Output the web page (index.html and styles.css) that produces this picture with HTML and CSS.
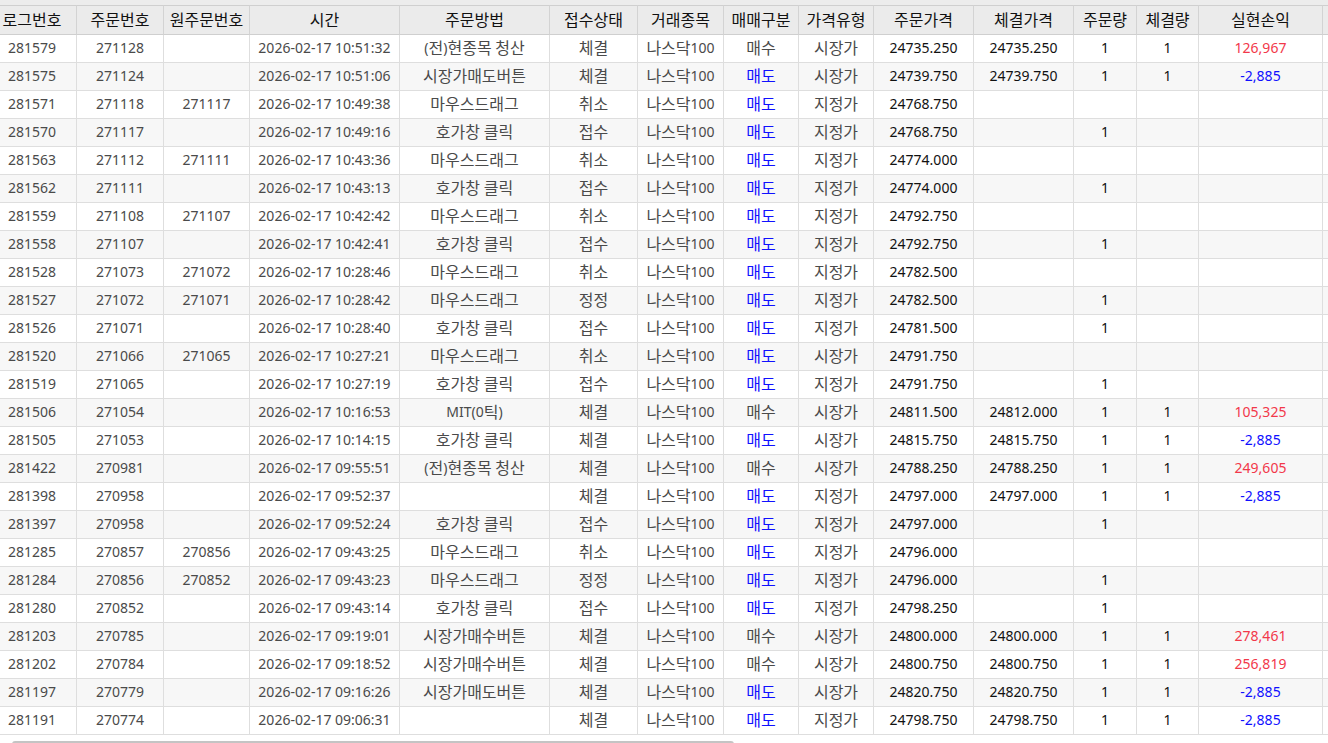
FILE: index.html
```html
<!DOCTYPE html>
<html lang="ko">
<head>
<meta charset="utf-8">
<title>주문 로그</title>
<link rel="stylesheet" href="styles.css">
</head>
<body>
<div class="topstrip"></div>
<div class="grid">
  <div class="row head">
    <div class="c first">로그번호</div><div class="c">주문번호</div><div class="c">원주문번호</div><div class="c">시간</div><div class="c">주문방법</div><div class="c">접수상태</div><div class="c">거래종목</div><div class="c">매매구분</div><div class="c">가격유형</div><div class="c">주문가격</div><div class="c">체결가격</div><div class="c">주문량</div><div class="c">체결량</div><div class="c">실현손익</div><div class="c"></div>
  </div>
</div>
<div class="grid" id="body"></div>
<div class="hscroll"><div class="thumb"></div></div>
<script src="app.js"></script>
</body>
</html>
```

FILE: app.js
```js
const rows = [
["281579","271128","","10:51:32","(전)현종목 청산","체결","매수","시장가","24735.250","24735.250","1","1","126,967"],
["281575","271124","","10:51:06","시장가매도버튼","체결","매도","시장가","24739.750","24739.750","1","1","-2,885"],
["281571","271118","271117","10:49:38","마우스드래그","취소","매도","지정가","24768.750","","","",""],
["281570","271117","","10:49:16","호가창 클릭","접수","매도","지정가","24768.750","","1","",""],
["281563","271112","271111","10:43:36","마우스드래그","취소","매도","지정가","24774.000","","","",""],
["281562","271111","","10:43:13","호가창 클릭","접수","매도","지정가","24774.000","","1","",""],
["281559","271108","271107","10:42:42","마우스드래그","취소","매도","지정가","24792.750","","","",""],
["281558","271107","","10:42:41","호가창 클릭","접수","매도","지정가","24792.750","","1","",""],
["281528","271073","271072","10:28:46","마우스드래그","취소","매도","지정가","24782.500","","","",""],
["281527","271072","271071","10:28:42","마우스드래그","정정","매도","지정가","24782.500","","1","",""],
["281526","271071","","10:28:40","호가창 클릭","접수","매도","지정가","24781.500","","1","",""],
["281520","271066","271065","10:27:21","마우스드래그","취소","매도","시장가","24791.750","","","",""],
["281519","271065","","10:27:19","호가창 클릭","접수","매도","지정가","24791.750","","1","",""],
["281506","271054","","10:16:53","MIT(0틱)","체결","매수","시장가","24811.500","24812.000","1","1","105,325"],
["281505","271053","","10:14:15","호가창 클릭","체결","매도","시장가","24815.750","24815.750","1","1","-2,885"],
["281422","270981","","09:55:51","(전)현종목 청산","체결","매수","시장가","24788.250","24788.250","1","1","249,605"],
["281398","270958","","09:52:37","","체결","매도","지정가","24797.000","24797.000","1","1","-2,885"],
["281397","270958","","09:52:24","호가창 클릭","접수","매도","지정가","24797.000","","1","",""],
["281285","270857","270856","09:43:25","마우스드래그","취소","매도","지정가","24796.000","","","",""],
["281284","270856","270852","09:43:23","마우스드래그","정정","매도","지정가","24796.000","","1","",""],
["281280","270852","","09:43:14","호가창 클릭","접수","매도","지정가","24798.250","","1","",""],
["281203","270785","","09:19:01","시장가매수버튼","체결","매수","시장가","24800.000","24800.000","1","1","278,461"],
["281202","270784","","09:18:52","시장가매수버튼","체결","매수","시장가","24800.750","24800.750","1","1","256,819"],
["281197","270779","","09:16:26","시장가매도버튼","체결","매도","시장가","24820.750","24820.750","1","1","-2,885"],
["281191","270774","","09:06:31","","체결","매도","지정가","24798.750","24798.750","1","1","-2,885"]
];
const body = document.getElementById("body");
function fill(el, text) {
  const re = /[\x20-\x7e]+|[^\x20-\x7e]+/g;
  const parts = text.match(re) || [];
  parts.forEach(p => {
    const s = document.createElement("span");
    s.className = /^[\x20-\x7e]+$/.test(p) ? "n" : "k";
    s.textContent = p;
    el.appendChild(s);
  });
}
rows.forEach((r, i) => {
  const row = document.createElement("div");
  row.className = "row" + (i % 2 ? " alt" : "");
  const cells = [
    [r[0], "first"], [r[1], ""], [r[2], ""], ["2026-02-17 " + r[3], ""], [r[4], ""], [r[5], ""],
    ["나스닥100", ""], [r[6], r[6] === "매도" ? "blue" : ""], [r[7], ""],
    [r[8], "dark"], [r[9], "dark"], [r[10], "dark"], [r[11], "dark"],
    [r[12], r[12].startsWith("-") ? "blue" : "red"], ["", ""]
  ];
  cells.forEach(([t, cls]) => {
    const c = document.createElement("div");
    c.className = "c" + (cls ? " " + cls : "");
    fill(c, t);
    row.appendChild(c);
  });
  body.appendChild(row);
});
```

FILE: styles.css
```css
html, body {
  margin: 0;
  padding: 0;
  background: #ffffff;
  overflow: hidden;
}
body {
  font-family: "Noto Sans", "Noto Sans CJK KR", sans-serif;
  font-size: 16px;
  color: #4a4a4a;
  width: 1328px;
  height: 743px;
}
.topstrip {
  height: 5px;
  background: #ececec;
}
.row {
  display: grid;
  grid-template-columns: 77px 87px 86px 150px 150px 88px 86px 75px 75px 100px 100px 63px 62px 124px 10px;
  height: 28px;
  background: #ffffff;
}
.row.alt {
  background: #f7f7f7;
}
.c {
  box-sizing: border-box;
  border-right: 1px solid #dedede;
  border-bottom: 1px solid #dedede;
  display: flex;
  align-items: center;
  justify-content: center;
  white-space: pre;
  overflow: hidden;
  line-height: 1;
  padding-bottom: 1px;
  font-size: 16px;
}
.n {
  font-size: 14px;
}
.k {
  font-size: 16px;
}
.c.first {
  padding-right: 12px;
}
.row.head {
  height: 30px;
  background: #ebebeb;
  color: #111111;
}
.row.head .c {
  border-top: 1px solid #cfcfcf;
  border-bottom: 1px solid #cfcfcf;
  border-right-color: #d3d3d3;
}
.dark {
  color: #111111;
}
.blue {
  color: #1010ff;
}
.red {
  color: #f2384a;
}
.hscroll {
  padding-top: 6px;
}
.thumb {
  margin-left: 12px;
  width: 722px;
  height: 6px;
  background: #c4c4c4;
  border-radius: 3px;
}
```
